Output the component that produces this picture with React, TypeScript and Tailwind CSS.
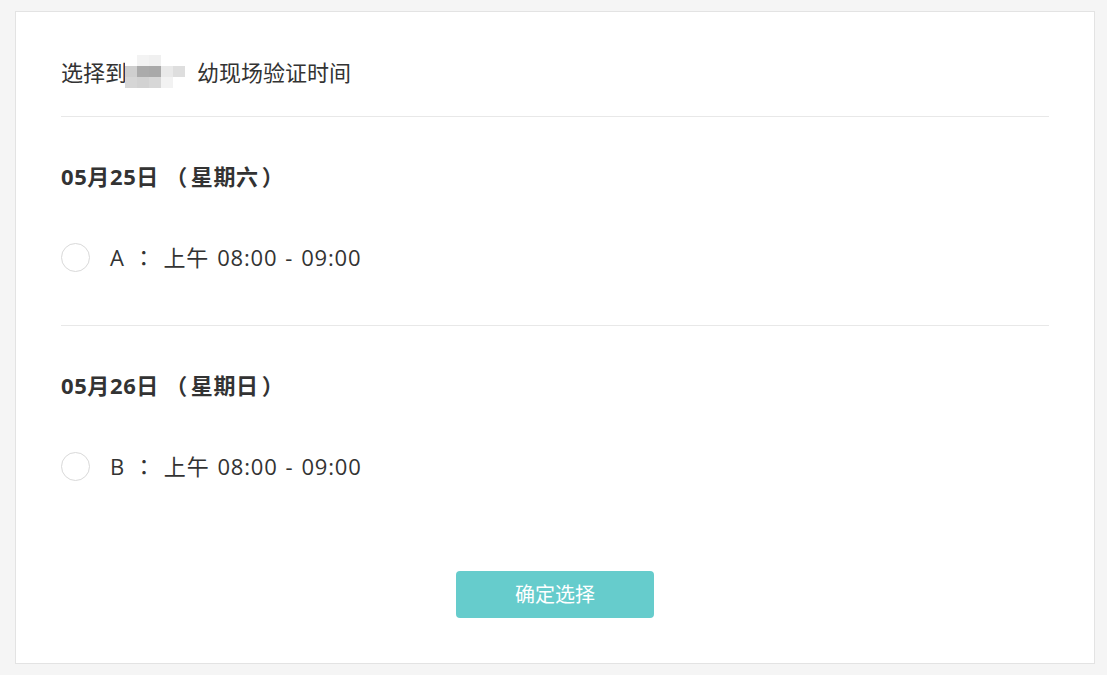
import { useState } from 'react';

const slots = [
  { day: '05月25日', week: '星期六', key: 'A', time: '上午 08:00 - 09:00' },
  { day: '05月26日', week: '星期日', key: 'B', time: '上午 08:00 - 09:00' },
];

// blurred mosaic over the hidden part of the title
const mosaic = [
  ['bg-white', 'bg-[#f3f3f3]', 'bg-[#f0f0f0]', 'bg-white', 'bg-white', 'bg-white'],
  ['bg-[#cfcfcf]', 'bg-[#ababab]', 'bg-[#a9a9a9]', 'bg-[#e9e9e9]', 'bg-[#dedede]', 'bg-white'],
  ['bg-[#d6d6d6]', 'bg-[#d2d2d2]', 'bg-[#d7d7d7]', 'bg-[#f2f2f2]', 'bg-white', 'bg-white'],
];

export default function App() {
  const [picked, setPicked] = useState<string | null>(null);

  return (
    <div className="min-h-[675px] bg-[#f5f5f5] pl-[15px] pt-[11px] pb-[11px] font-['Open_Sans','Noto_Sans_CJK_SC',sans-serif] text-[#333]">
      <div className="w-[1080px] h-[653px] bg-white border border-[#e3e3e3] px-[45px]">
        <div className="pt-[43px] pb-[28px] text-[22px] leading-[32px] flex items-center">
          <span>选择到</span>
          <span className="inline-grid grid-cols-6 w-[72px] h-[33px] -ml-[2px]">
            {mosaic.flat().map((c, i) => (
              <span key={i} className={c} />
            ))}
          </span>
          <span>幼现场验证时间</span>
        </div>

        {slots.map((s) => (
          <div key={s.key} className="border-t border-[#e8e8e8]">
            <div className="pt-[45px] text-[22px] leading-[28px] font-bold tracking-[0.6px] whitespace-pre">
              {s.day} （<span className="px-[3px]">{s.week}</span>）
            </div>
            <label className="mt-[53px] pb-[53px] flex items-center cursor-pointer" onClick={() => setPicked(s.key)}>
              <span className="w-[29px] h-[29px] rounded-full border border-[#d9d9d9] flex items-center justify-center shrink-0">
                {picked === s.key && <span className="w-[13px] h-[13px] rounded-full bg-[#66cccc]" />}
              </span>
              <span className="ml-[20px] text-[22px] leading-[29px] tracking-[0.8px] [word-spacing:1.5px] whitespace-pre font-['Open_Sans','Noto_Sans_CJK_TC',sans-serif]">
                {s.key} ： {s.time}
              </span>
            </label>
          </div>
        ))}

        <div className="flex justify-center mt-[37px]">
          <button className="w-[198px] h-[47px] rounded-[4px] bg-[#66cccc] text-white text-[20px]">
            确定选择
          </button>
        </div>
      </div>
    </div>
  );
}
